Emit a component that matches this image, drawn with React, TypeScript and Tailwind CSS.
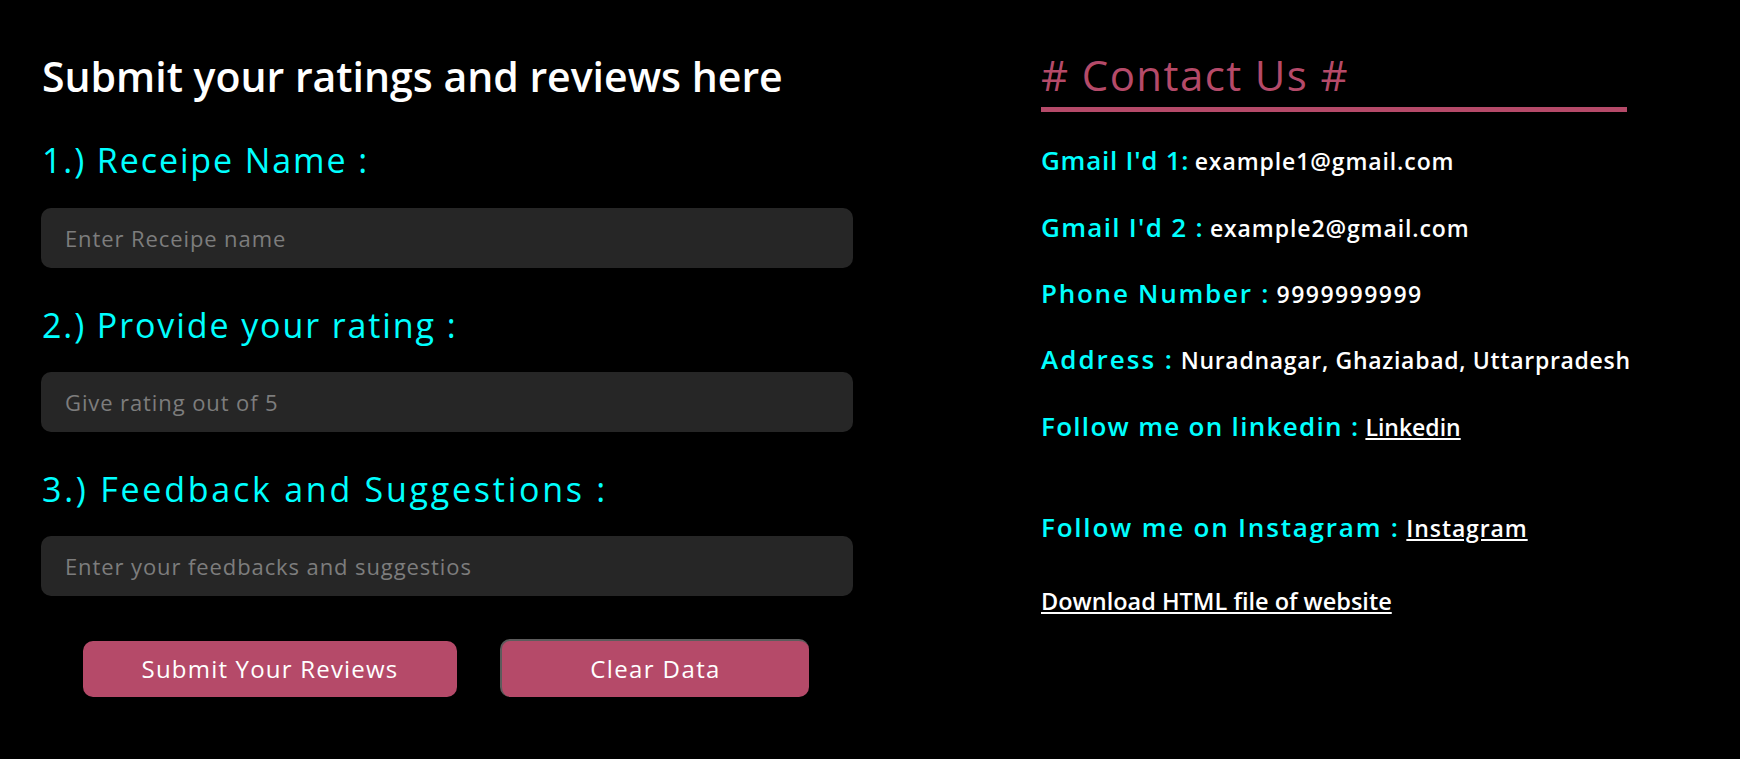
import React from "react";

const font = { fontFamily: '"Open Sans", "Noto Sans", sans-serif' };

function Label({ children, className = "" }: { children: React.ReactNode; className?: string }) {
  return (
    <div className={"text-[34px] leading-[40px] font-normal text-[#00ffff] whitespace-nowrap " + className}>
      {children}
    </div>
  );
}

function Field({ placeholder, className = "" }: { placeholder: string; className?: string }) {
  return (
    <input
      placeholder={placeholder}
      className={
        "block w-[812px] h-[60px] rounded-[10px] bg-[#262626] pl-[24px] text-[22px] tracking-[0.9px] text-white placeholder:text-[#7d7d7d] outline-none border-0 " +
        className
      }
    />
  );
}

function Row({
  label,
  children,
  className = "",
  lt = "tracking-[1.3px]",
  vt = "tracking-[0.9px]",
}: {
  label: string;
  children: React.ReactNode;
  className?: string;
  lt?: string;
  vt?: string;
}) {
  return (
    <div className={"text-[26px] leading-[36px] whitespace-nowrap " + className}>
      <span className={"font-semibold text-[#00ffff] " + lt}>{label}</span>
      <span className={"ml-[-2px] text-[23px] leading-none font-semibold text-white " + vt}>{children}</span>
    </div>
  );
}

export default function App() {
  return (
    <div className="min-h-[759px] w-full bg-black flex" style={font}>
      <div className="ml-[42px] w-[812px] flex flex-col">
        <h1 className="mt-[52px] text-[41px] leading-[48px] font-semibold text-white whitespace-nowrap">
          Submit your ratings and reviews here
        </h1>
        <Label className="mt-[40px] tracking-[1.9px]">1.) Receipe Name :</Label>
        <Field placeholder="Enter Receipe name" className="mt-[28px] -ml-px" />
        <Label className="mt-[37px] tracking-[1.9px]">2.) Provide your rating :</Label>
        <Field placeholder="Give rating out of 5" className="mt-[27px] -ml-px" />
        <Label className="mt-[37px] tracking-[2.75px]">3.) Feedback and Suggestions :</Label>
        <Field placeholder="Enter your feedbacks and suggestios" className="mt-[27px] -ml-px" />
        <div className="mt-[43px] flex items-end">
          <button className="ml-[41px] w-[374px] h-[56px] rounded-[10px] bg-[#b54a69] text-white text-[24px] tracking-[1.2px]">
            Submit Your Reviews
          </button>
          <button className="ml-[43px] w-[309px] h-[58px] rounded-[10px] bg-[#b54a69] text-white text-[24px] tracking-[1.4px] border-t-2 border-l-2 border-t-[#5c5c5c] border-l-[#5c5c5c]">
            Clear Data
          </button>
        </div>
      </div>
      <div className="ml-[187px] w-[586px] flex flex-col">
        <h2 className="mt-[50px] text-[42px] leading-[50px] font-normal tracking-[1.4px] text-[#b54a69] pb-[7px] border-b-[5px] border-[#b54a69] whitespace-nowrap">
          # Contact Us #
        </h2>
        <Row label="Gmail I'd 1: " className="mt-[30px]" lt="tracking-[0.75px]">
          example1@gmail.com
        </Row>
        <Row label="Gmail I'd 2 : " className="mt-[31px]">
          example2@gmail.com
        </Row>
        <Row label="Phone Number : " className="mt-[30px]" lt="tracking-[1.75px]" vt="tracking-[1.45px]">
          9999999999
        </Row>
        <Row label="Address : " className="mt-[30px]" lt="tracking-[2px]" vt="tracking-[0.7px]">
          Nuradnagar, Ghaziabad, Uttarpradesh
        </Row>
        <Row label="Follow me on linkedin : " className="mt-[31px]" vt="tracking-[0px]">
          <a href="#" className="underline">Linkedin</a>
        </Row>
        <Row label="Follow me on Instagram : " className="mt-[65px]" lt="tracking-[1.8px]">
          <a href="#" className="underline">Instagram</a>
        </Row>
        <div className="mt-[38px] text-[23.5px] leading-[36px] whitespace-nowrap">
          <a href="#" className="underline font-semibold text-white">Download HTML file of website</a>
        </div>
      </div>
    </div>
  );
}
